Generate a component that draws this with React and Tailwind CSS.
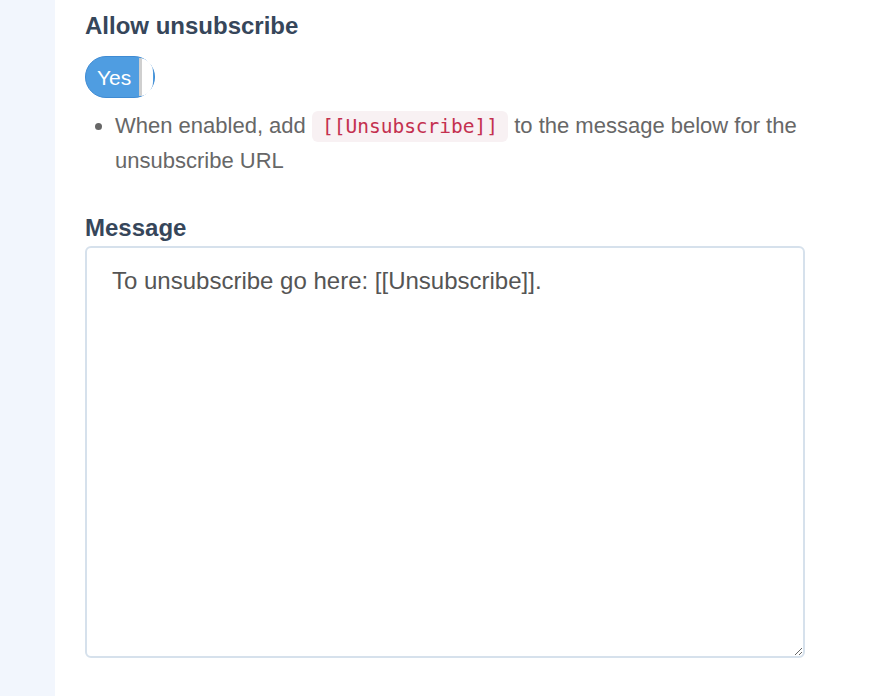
export default function App() {
  return (
    <div className="flex min-h-[696px] bg-white font-['Liberation_Sans',Arial,sans-serif]">
      <div className="w-[55px] shrink-0 bg-[#f2f6fd]" />
      <div className="w-[750px] pl-[30px] pt-[11px]">
        <h3 className="text-[24px] leading-[30px] font-bold text-[#36465a]">Allow unsubscribe</h3>
        <div className="mt-[15px] flex h-[42px] w-[70px] items-center rounded-full border border-[#3f8bd3] bg-[#4f9de1] pl-[11px]">
          <span className="text-[21px] leading-none text-white">Yes</span>
          <span className="ml-auto mr-[1px] h-[38px] w-[14px] shrink-0 rounded-r-full border-l-[3px] border-[#cfcfcf] bg-white" />
        </div>
        <ul className="mt-[11px] list-disc pl-[30px] text-[22px] leading-[34px] text-[#676767] marker:text-[#676767]">
          <li>
            When enabled, add{' '}
            <code className="rounded-md bg-[#f8f1f3] px-[10px] py-[4px] font-['DejaVu_Sans_Mono',monospace] text-[19.5px] leading-[34px] text-[#c4304f]">[[Unsubscribe]]</code>{' '}
            to the message below for the unsubscribe URL
          </li>
        </ul>
        <h3 className="mt-[35px] text-[24px] leading-[30px] font-bold text-[#36465a]">Message</h3>
        <textarea
          defaultValue="To unsubscribe go here: [[Unsubscribe]]."
          className="mt-[3px] block h-[412px] w-[720px] rounded-md border-2 border-[#d6e1ec] px-[25px] py-[18px] text-[24px] leading-[30px] text-[#555] outline-none"
        />
      </div>
    </div>
  );
}
